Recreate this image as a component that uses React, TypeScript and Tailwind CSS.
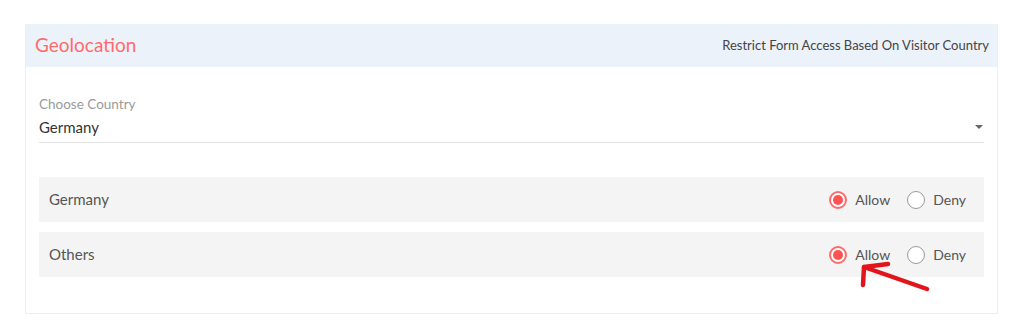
import React from "react";

function Radio({ checked, label }: { checked: boolean; label: string }) {
  return (
    <label className="flex items-center gap-[8px]">
      {checked ? (
        <span className="flex h-[18px] w-[18px] items-center justify-center rounded-full border-2 border-[#ff6b6b] bg-white">
          <span className="h-[10px] w-[10px] rounded-full bg-[#ff5252]" />
        </span>
      ) : (
        <span className="h-[18px] w-[18px] rounded-full border-[1.5px] border-[#9a9a9a] bg-white" />
      )}
      <span className="text-[14px] text-[#555]">{label}</span>
    </label>
  );
}

function Row({ name }: { name: string }) {
  return (
    <div className="flex h-[45px] items-center justify-between bg-[#f4f4f4] pl-[10px] pr-[18px]">
      <span className="text-[15px] text-[#555]">{name}</span>
      <div className="flex items-center gap-[17px]">
        <Radio checked label="Allow" />
        <Radio checked={false} label="Deny" />
      </div>
    </div>
  );
}

export default function App() {
  return (
    <div
      className="relative h-[330px] w-[1024px] bg-white pl-[25px] pt-[24px]"
      style={{ fontFamily: "Lato, 'Open Sans', sans-serif" }}
    >
      <div className="w-[973px] border border-[#eeeeee] border-t-0">
        <div className="flex h-[43px] items-center justify-between bg-[#ecf2f9] pl-[9px] pr-[8px]">
          <span className="text-[19px] text-[#ff6b6b]">Geolocation</span>
          <span className="text-[13px] text-[#444]">Restrict Form Access Based On Visitor Country</span>
        </div>
        <div className="px-[13px] pb-[36px] pt-[28px]">
          <div className="text-[13.5px] leading-[18px] text-[#9a9a9a]">Choose Country</div>
          <div className="flex items-center justify-between border-b border-[#e2e2e2] pb-[5px] pt-[4px]">
            <span className="text-[15px] leading-[20px] text-[#333]">Germany</span>
            <span className="mr-[1px] h-0 w-0 border-x-[4px] border-t-[4px] border-x-transparent border-t-[#666]" />
          </div>
          <div className="mt-[34px] flex flex-col gap-[10px]">
            <Row name="Germany" />
            <Row name="Others" />
          </div>
        </div>
      </div>
      <svg className="absolute left-0 top-0" width="1024" height="330" viewBox="0 0 1024 330">
        <g stroke="#e3151c" strokeWidth="4.5" strokeLinecap="round" strokeLinejoin="round" fill="none">
          <path d="M927 289 L864 267" />
          <path d="M888 264 L864 267 L863 285" />
        </g>
      </svg>
    </div>
  );
}
